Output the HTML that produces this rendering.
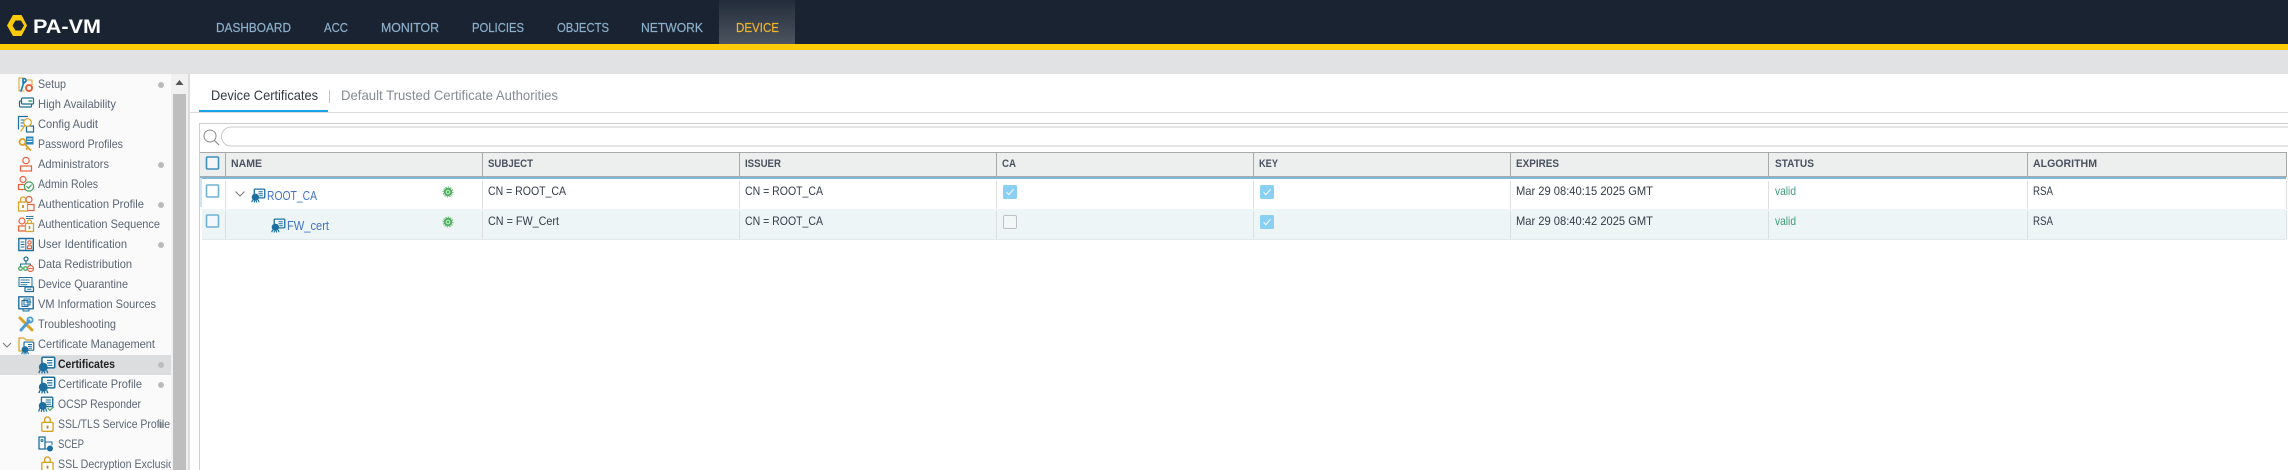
<!DOCTYPE html>
<html lang="en">
<head>
<meta charset="utf-8">
<title>PA-VM Device Certificates</title>
<style>
html,body{margin:0;padding:0;width:2288px;height:470px;overflow:hidden;background:#fff}
svg{display:block}
text{font-family:"Liberation Sans",sans-serif;white-space:pre}
.nav{font-size:13px;fill:#8db0cb;stroke:#8db0cb;stroke-width:.2}
.side{font-size:12px;fill:#5b6675}
.th{font-size:11px;font-weight:bold;fill:#4a5260}
.td{font-size:12px;fill:#333b47}
.ln{fill:none;stroke-width:1;stroke-linecap:round;stroke-linejoin:round}
</style>
</head>
<body>
<svg width="2288" height="470" viewBox="0 0 2288 470" xmlns="http://www.w3.org/2000/svg">
<defs>
<linearGradient id="act" x1="0" y1="0" x2="0" y2="1"><stop offset="0" stop-color="#232c3a"/><stop offset="1" stop-color="#4c545f"/></linearGradient>
<symbol id="cert" viewBox="0 0 16 16" overflow="visible">
<rect x="3.700" y=".7" width="12" height="10" rx="1" fill="#fff" stroke="#1d6f9f" stroke-width="1.500"/>
<path d="M8.500 3.700h5M8.500 6h5M9.500 8.300h4" stroke="#1d6f9f" stroke-width="1.100" fill="none"/>
<circle cx="5" cy="10" r="4.200" fill="#1d6f9f"/>
<path d="M1.800 13l-1 2.600M4 14l-.4 2M6 14l.4 2M8.200 13l1 2.600" stroke="#1d6f9f" stroke-width="1.300" fill="none"/>
</symbol>
<symbol id="lock" viewBox="0 0 16 16" overflow="visible">
<rect x="2.500" y="6.500" width="10" height="8" rx="1" fill="#fff" stroke="#d9a224" stroke-width="1.200"/>
<path d="M5 6.500V4.200a2.500 2.500 0 0 1 5 0v2.300" fill="none" stroke="#d9a224" stroke-width="1.200"/>
<rect x="6.800" y="9.500" width="1.600" height="2.600" fill="#b8861c"/>
</symbol>
<symbol id="person" viewBox="0 0 16 16" overflow="visible">
<circle cx="8" cy="4.500" r="3.200" fill="none" stroke="#e8603c" stroke-width="1.200"/>
<rect x="2.500" y="10" width="11" height="5" fill="none" stroke="#e8603c" stroke-width="1.200"/>
</symbol>
<symbol id="gear" viewBox="0 0 12 12">
<circle cx="6" cy="6" r="4.600" fill="#4cae5c"/>
<circle cx="6" cy="6" r="5.400" fill="none" stroke="#4cae5c" stroke-width="1" stroke-dasharray="1.400 1.400"/>
<circle cx="6" cy="6" r="2.600" fill="#bfe5c5"/>
<circle cx="6" cy="6" r="1.300" fill="#4cae5c"/>
</symbol>
<symbol id="chk" viewBox="0 0 14 14">
<rect width="14" height="14" rx="1.500" fill="#8ad0f2"/>
<path d="M3.600 7.400l2.300 2.300 4.600-5.400" fill="none" stroke="#fff" stroke-width="1"/>
</symbol>
</defs>

<!-- page bands -->
<rect width="2288" height="44" fill="#1a2331"/>
<rect x="719" width="76" height="44" fill="url(#act)"/>
<rect y="44" width="2288" height="6" fill="#fecb08"/>
<rect y="50" width="2288" height="24" fill="#e1e2e4"/>

<!-- logo -->
<path d="M13 15h8.500L27 25.500 21.500 36H13L7 25.500z" fill="#fecb08"/>
<path d="M15.500 20.500h5.500l3 5-3 5h-5.500l-3-5z" fill="#1a2331"/>
<text x="33" y="33" font-size="19" font-weight="bold" fill="#fff" textLength="68" lengthAdjust="spacingAndGlyphs">PA-VM</text>

<!-- nav -->
<text class="nav" x="216" y="32" textLength="75" lengthAdjust="spacingAndGlyphs">DASHBOARD</text>
<text class="nav" x="324" y="32" textLength="24" lengthAdjust="spacingAndGlyphs">ACC</text>
<text class="nav" x="381" y="32" textLength="58" lengthAdjust="spacingAndGlyphs">MONITOR</text>
<text class="nav" x="472" y="32" textLength="52" lengthAdjust="spacingAndGlyphs">POLICIES</text>
<text class="nav" x="557" y="32" textLength="52" lengthAdjust="spacingAndGlyphs">OBJECTS</text>
<text class="nav" x="641" y="32" textLength="62" lengthAdjust="spacingAndGlyphs">NETWORK</text>
<text x="736" y="32" font-size="13" fill="#f0b429" stroke="#f0b429" stroke-width=".2" textLength="43" lengthAdjust="spacingAndGlyphs">DEVICE</text>

<!-- sidebar -->
<rect y="74" width="171" height="396" fill="#fafafa"/>
<rect x="171" y="74" width="17" height="396" fill="#f1f1f1"/>
<rect x="173" y="94" width="13" height="376" fill="#bebebe"/>
<path d="M175.500 85l4-5 4 5z" fill="#555"/>
<rect x="188" y="74" width="2" height="396" fill="#dcdcdc"/>
<rect y="355" width="171" height="20" fill="#dcdddf"/>

<g class="dots" fill="#bcbcbc">
<circle cx="161" cy="85" r="3"/><circle cx="161" cy="165" r="3"/><circle cx="161" cy="205" r="3"/>
<circle cx="161" cy="245" r="3"/><circle cx="161" cy="365" r="3"/><circle cx="161" cy="385" r="3"/><circle cx="161" cy="425" r="3"/>
</g>

<text class="side" x="38" y="88" textLength="28" lengthAdjust="spacingAndGlyphs">Setup</text>
<text class="side" x="38" y="108" textLength="78" lengthAdjust="spacingAndGlyphs">High Availability</text>
<text class="side" x="38" y="128" textLength="60" lengthAdjust="spacingAndGlyphs">Config Audit</text>
<text class="side" x="38" y="148" textLength="85" lengthAdjust="spacingAndGlyphs">Password Profiles</text>
<text class="side" x="38" y="168" textLength="71" lengthAdjust="spacingAndGlyphs">Administrators</text>
<text class="side" x="38" y="188" textLength="60" lengthAdjust="spacingAndGlyphs">Admin Roles</text>
<text class="side" x="38" y="208" textLength="106" lengthAdjust="spacingAndGlyphs">Authentication Profile</text>
<text class="side" x="38" y="228" textLength="122" lengthAdjust="spacingAndGlyphs">Authentication Sequence</text>
<text class="side" x="38" y="248" textLength="89" lengthAdjust="spacingAndGlyphs">User Identification</text>
<text class="side" x="38" y="268" textLength="94" lengthAdjust="spacingAndGlyphs">Data Redistribution</text>
<text class="side" x="38" y="288" textLength="90" lengthAdjust="spacingAndGlyphs">Device Quarantine</text>
<text class="side" x="38" y="308" textLength="118" lengthAdjust="spacingAndGlyphs">VM Information Sources</text>
<text class="side" x="38" y="328" textLength="78" lengthAdjust="spacingAndGlyphs">Troubleshooting</text>
<text class="side" x="38" y="348" textLength="117" lengthAdjust="spacingAndGlyphs">Certificate Management</text>
<text x="58" y="368" font-size="12" font-weight="bold" fill="#222" textLength="57" lengthAdjust="spacingAndGlyphs">Certificates</text>
<text class="side" x="58" y="388" textLength="84" lengthAdjust="spacingAndGlyphs">Certificate Profile</text>
<text class="side" x="58" y="408" textLength="83" lengthAdjust="spacingAndGlyphs">OCSP Responder</text>
<text class="side" x="58" y="428" textLength="112" lengthAdjust="spacingAndGlyphs">SSL/TLS Service Profile</text>
<text class="side" x="58" y="448" textLength="26" lengthAdjust="spacingAndGlyphs">SCEP</text>
<svg x="0" y="455" width="171" height="15"><text class="side" x="58" y="13" textLength="122" lengthAdjust="spacingAndGlyphs">SSL Decryption Exclusion</text></svg>

<!-- sidebar icons -->
<!-- setup -->
<g transform="translate(18,76)" class="ln">
<path d="M1 15V2h5l2 2h6v5" stroke="#d9a224"/><path d="M1 15h5" stroke="#d9a224"/>
<path d="M3 15l3-9M5 3c2-1 3 0 3 2l-2 2-1 0z" stroke="#1d7fb4" stroke-width="1.700"/>
<circle cx="11" cy="12" r="3" stroke="#e8603c" stroke-width="2"/>
</g>
<!-- HA -->
<g transform="translate(18,96)" class="ln" stroke="#1d6f8f">
<rect x="1.500" y="5" width="12" height="6" rx="1" stroke-width="1.200"/>
<rect x="3.500" y="2" width="12" height="6" rx="1" fill="#fafafa" stroke-width="1.200"/>
<path d="M11 5h2.500" stroke="#3da35d" stroke-width="1.600"/>
</g>
<!-- config audit -->
<g transform="translate(18,116)" class="ln">
<path d="M.5 13V.5h9" stroke="#1d6f9f" stroke-width="1.200"/>
<path d="M3 4h4M3 7h3M3 10h2" stroke="#1d6f9f"/>
<rect x="8.500" y="10" width="7" height="6" stroke="#1d6f9f" stroke-width="1.200"/>
<circle cx="9.500" cy="6.500" r="3.800" stroke="#d9a224" stroke-width="1.200" fill="#fff"/>
<path d="M6.500 10l-3.500 5" stroke="#d9a224" stroke-width="1.200"/>
</g>
<!-- password -->
<g transform="translate(18,136)" class="ln">
<rect x="8" y=".5" width="7.500" height="8" fill="#2a87bd"/>
<path d="M9.500 3h4.500M9.500 5.500h4.500" stroke="#fff"/>
<circle cx="4.500" cy="6" r="3" stroke="#d9a224" stroke-width="1.800"/>
<path d="M6.500 8l6 6M10 11.500l-1.500 1.500" stroke="#d9a224" stroke-width="1.800"/>
</g>
<use href="#person" x="18" y="156" width="16" height="16"/>
<!-- admin roles -->
<g transform="translate(18,176)" class="ln">
<circle cx="5" cy="3.500" r="3" stroke="#e8603c" stroke-width="1.200"/>
<rect x=".5" y="8.500" width="8" height="5" stroke="#e8603c" stroke-width="1.200"/>
<circle cx="11" cy="10.500" r="4.600" fill="#fafafa" stroke="#3da35d" stroke-width="1.200"/>
<path d="M8.800 10.500l1.700 1.800 2.800-3.300" stroke="#3da35d" stroke-width="1.200"/>
</g>
<!-- auth profile -->
<g transform="translate(18,196)" class="ln">
<circle cx="11" cy="3.500" r="3" stroke="#e8603c" stroke-width="1.200"/>
<rect x="8" y="8.500" width="8" height="6" stroke="#e8603c" stroke-width="1.200"/>
<rect x=".5" y="6" width="9" height="9" fill="#fafafa" stroke="#d9a224" stroke-width="1.200"/>
<path d="M2.500 6V3.500a2.500 2.500 0 0 1 5 0V6" stroke="#d9a224" stroke-width="1.200"/>
<rect x="4.200" y="9" width="1.600" height="3" fill="#b8861c"/>
</g>
<!-- auth sequence -->
<g transform="translate(18,216)" class="ln">
<circle cx="4" cy="5" r="3" stroke="#e8603c" stroke-width="1.200"/>
<rect x=".5" y="10" width="7" height="5" stroke="#e8603c" stroke-width="1.200"/>
<path d="M8.500 .5h7M8.500 2.500h7" stroke="#1d6f9f" stroke-dasharray="1.500 1"/>
<rect x="7.500" y="7.500" width="8" height="8" fill="#fafafa" stroke="#d9a224" stroke-width="1.200"/>
<path d="M9.500 7.500V6a2 2 0 0 1 4 0v1.500" stroke="#d9a224" stroke-width="1.200"/>
<rect x="10.800" y="10" width="1.400" height="3" fill="#b8861c"/>
</g>
<!-- user id -->
<g transform="translate(18,236)" class="ln">
<rect x=".8" y="2.500" width="14.500" height="12" stroke="#1d6f9f" stroke-width="1.400"/>
<path d="M3 6h3M3 8.500h3M3 11h3M7.800 3v11" stroke="#1d6f9f"/>
<circle cx="11.500" cy="6.500" r="1.700" stroke="#e8603c" stroke-width="1.100"/>
<rect x="9.500" y="9.800" width="4" height="2.800" stroke="#e8603c" stroke-width="1.100"/>
</g>
<!-- data redistribution -->
<g transform="translate(18,256)" class="ln">
<circle cx="8" cy="3" r="2" stroke="#1d6f8f" stroke-width="1.200"/>
<path d="M8 5v3M2.500 11V8h10v1" stroke="#1d6f8f"/>
<circle cx="2.500" cy="12.500" r="1.800" stroke="#3da35d" stroke-width="1.200"/>
<circle cx="7.500" cy="12.500" r="1.800" stroke="#3da35d" stroke-width="1.200"/>
<circle cx="12.500" cy="12.500" r="3" fill="#fafafa" stroke="#e8603c" stroke-width="1.200"/>
<path d="M10.800 12.500h3.400" stroke="#e8603c"/>
</g>
<!-- device quarantine -->
<g transform="translate(18,276)" class="ln" stroke="#1d6f9f">
<rect x="1" y="1.500" width="13" height="9"/>
<path d="M3 4h9M3 6.500h9M3 8.800h6" stroke-dasharray="1.300 1"/>
<rect x="7" y="11" width="8.500" height="4.500" fill="#fafafa" stroke-width="1.200"/>
<path d="M9.500 13.200h3.500"/>
</g>
<!-- VM -->
<g transform="translate(18,296)" class="ln" stroke="#1d6f9f">
<rect x=".8" y=".8" width="14.400" height="12" stroke-width="1.400"/>
<rect x="4" y="4.500" width="6" height="6"/><rect x="6" y="3" width="6" height="6"/>
<path d="M8 6h5M5 13v2h6v-2"/>
</g>
<!-- troubleshooting -->
<g transform="translate(18,316)" class="ln">
<path d="M2 2l12 12" stroke="#d9a224" stroke-width="3"/>
<path d="M3 14L11 5" stroke="#4a9fd0" stroke-width="3"/>
<circle cx="12" cy="4" r="2.600" stroke="#4a9fd0" stroke-width="1.800"/>
</g>
<!-- chevron + cert mgmt -->
<path d="M3 343l4 4 4-4" fill="none" stroke="#777" stroke-width="1"/>
<g transform="translate(18,336)" class="ln">
<path d="M1 15V2h5l2 2h7" stroke="#d9a224" stroke-width="1.200"/>
<path d="M1 15h4" stroke="#d9a224" stroke-width="1.200"/>
</g>
<use href="#cert" x="21" y="341" width="13" height="14"/>
<use href="#cert" x="38" y="356" width="17" height="18"/>
<use href="#cert" x="38" y="376" width="17" height="18"/>
<g transform="translate(38,396)" class="ln">
<use href="#cert" width="15" height="16"/>
<path d="M10 12.500l2 2 3.500-3.500" stroke="#3da35d" stroke-width="1.200"/>
</g>
<use href="#lock" x="39" y="415" width="18" height="18"/>
<g transform="translate(38,436)" class="ln">
<rect x="1" y="1" width="6" height="12" stroke="#1d6f9f" stroke-width="1.300"/>
<circle cx="4" cy="4.500" r="1" stroke="#1d6f9f"/>
<path d="M7 6h7v3M7 13h2" stroke="#1d6f9f"/>
<circle cx="12" cy="12.500" r="3" fill="#1d6f9f"/>
</g>
<use href="#lock" x="39" y="455" width="18" height="18"/>

<!-- tabs -->
<text x="211" y="100" font-size="14" fill="#333a44" textLength="107" lengthAdjust="spacingAndGlyphs">Device Certificates</text>
<rect x="329" y="90" width="1" height="13" fill="#c4c4c4"/>
<text x="341" y="100" font-size="14" fill="#868b93" textLength="217" lengthAdjust="spacingAndGlyphs">Default Trusted Certificate Authorities</text>
<rect x="189" y="112" width="2099" height="1" fill="#dcdcdc"/>
<rect x="199" y="110" width="129" height="2" fill="#17a1e6"/>

<!-- table frame / search -->
<rect x="199" y="123" width="2089" height="1" fill="#cfcfcf"/>
<rect x="199" y="123" width="1" height="347" fill="#cfcfcf"/>
<circle cx="210" cy="136" r="6" fill="none" stroke="#8a8a8a" stroke-width="1"/>
<path d="M214.500 140.500l4.500 4.500" stroke="#8a8a8a" stroke-width="1.200"/>
<path d="M2288 127H231a9.500 9.500 0 0 0 0 19H2288" fill="#fff" stroke="#c9c9c9" stroke-width="1"/>

<!-- header -->
<rect x="200" y="152" width="2086" height="25" fill="#edeeee"/>
<rect x="200" y="152" width="2086" height="1" fill="#a8a9ab"/>
<rect x="200" y="176" width="2086" height="1" fill="#a8a9ab"/>
<rect x="200" y="177" width="2086" height="2" fill="#7fb7d6"/>
<g fill="#a8a9ab">
<rect x="225" y="152" width="1" height="25"/><rect x="482" y="152" width="1" height="25"/>
<rect x="739" y="152" width="1" height="25"/><rect x="996" y="152" width="1" height="25"/>
<rect x="1253" y="152" width="1" height="25"/><rect x="1510" y="152" width="1" height="25"/>
<rect x="1768" y="152" width="1" height="25"/><rect x="2027" y="152" width="1" height="25"/>
<rect x="2286" y="152" width="1" height="25"/>
</g>
<rect x="206.500" y="157" width="12" height="12" rx="1" fill="#f4f6f7" stroke="#3f8fbd" stroke-width="1.600"/>
<text class="th" x="231" y="167" textLength="31" lengthAdjust="spacingAndGlyphs">NAME</text>
<text class="th" x="488" y="167" textLength="45" lengthAdjust="spacingAndGlyphs">SUBJECT</text>
<text class="th" x="745" y="167" textLength="36" lengthAdjust="spacingAndGlyphs">ISSUER</text>
<text class="th" x="1002" y="167" textLength="14" lengthAdjust="spacingAndGlyphs">CA</text>
<text class="th" x="1259" y="167" textLength="19" lengthAdjust="spacingAndGlyphs">KEY</text>
<text class="th" x="1516" y="167" textLength="43" lengthAdjust="spacingAndGlyphs">EXPIRES</text>
<text class="th" x="1775" y="167" textLength="39" lengthAdjust="spacingAndGlyphs">STATUS</text>
<text class="th" x="2033" y="167" textLength="64" lengthAdjust="spacingAndGlyphs">ALGORITHM</text>

<!-- rows -->
<rect x="202" y="209" width="2084" height="30" fill="#eef5f7"/>
<rect x="202" y="239" width="2084" height="1" fill="#e4e8ea"/>
<rect x="200" y="178" width="2" height="29" fill="#cde6f3"/>
<g fill="#dcdedf">
<rect x="225" y="181" width="1" height="28"/><rect x="225" y="211" width="1" height="28"/>
<rect x="482" y="181" width="1" height="28"/><rect x="482" y="211" width="1" height="28"/>
<rect x="739" y="181" width="1" height="28"/><rect x="739" y="211" width="1" height="28"/>
<rect x="996" y="181" width="1" height="28"/><rect x="996" y="211" width="1" height="28"/>
<rect x="1253" y="181" width="1" height="28"/><rect x="1253" y="211" width="1" height="28"/>
<rect x="1510" y="181" width="1" height="28"/><rect x="1510" y="211" width="1" height="28"/>
<rect x="1768" y="181" width="1" height="28"/><rect x="1768" y="211" width="1" height="28"/>
<rect x="2027" y="181" width="1" height="28"/><rect x="2027" y="211" width="1" height="28"/>
<rect x="2286" y="181" width="1" height="28"/><rect x="2286" y="211" width="1" height="28"/>
</g>

<rect x="206.500" y="185" width="12" height="12" rx="1" fill="#fff" stroke="#6fb1d3" stroke-width="1.600"/>
<rect x="206.500" y="215" width="12" height="12" rx="1" fill="#f4f8fa" stroke="#6fb1d3" stroke-width="1.600"/>

<path d="M235.500 191.500l4.500 4.500 4.500-4.500" fill="none" stroke="#777" stroke-width="1"/>
<use href="#cert" x="251" y="188" width="14" height="15"/>
<use href="#cert" x="271" y="218" width="14" height="15"/>
<text x="267" y="200" font-size="13" fill="#3f73c4" textLength="50" lengthAdjust="spacingAndGlyphs">ROOT_CA</text>
<text x="287" y="230" font-size="13" fill="#3f73c4" textLength="42" lengthAdjust="spacingAndGlyphs">FW_cert</text>
<use href="#gear" x="442.500" y="186.500" width="11" height="11"/>
<use href="#gear" x="442.500" y="216.500" width="11" height="11"/>

<text class="td" x="488" y="195" textLength="78" lengthAdjust="spacingAndGlyphs">CN = ROOT_CA</text>
<text class="td" x="488" y="225" textLength="71" lengthAdjust="spacingAndGlyphs">CN = FW_Cert</text>
<text class="td" x="745" y="195" textLength="78" lengthAdjust="spacingAndGlyphs">CN = ROOT_CA</text>
<text class="td" x="745" y="225" textLength="78" lengthAdjust="spacingAndGlyphs">CN = ROOT_CA</text>

<use href="#chk" x="1003" y="185" width="14" height="14"/>
<rect x="1003.500" y="215.500" width="13" height="13" rx="1.500" fill="#f3f7f8" stroke="#bcc1c4" stroke-width="1"/>
<use href="#chk" x="1260" y="185" width="14" height="14"/>
<use href="#chk" x="1260" y="215" width="14" height="14"/>

<text class="td" x="1516" y="195" textLength="137" lengthAdjust="spacingAndGlyphs">Mar 29 08:40:15 2025 GMT</text>
<text class="td" x="1516" y="225" textLength="137" lengthAdjust="spacingAndGlyphs">Mar 29 08:40:42 2025 GMT</text>
<text x="1775" y="195" font-size="12" fill="#3f9a78" textLength="21" lengthAdjust="spacingAndGlyphs">valid</text>
<text x="1775" y="225" font-size="12" fill="#3f9a78" textLength="21" lengthAdjust="spacingAndGlyphs">valid</text>
<text class="td" x="2033" y="195" textLength="20" lengthAdjust="spacingAndGlyphs">RSA</text>
<text class="td" x="2033" y="225" textLength="20" lengthAdjust="spacingAndGlyphs">RSA</text>
</svg>
</body>
</html>
